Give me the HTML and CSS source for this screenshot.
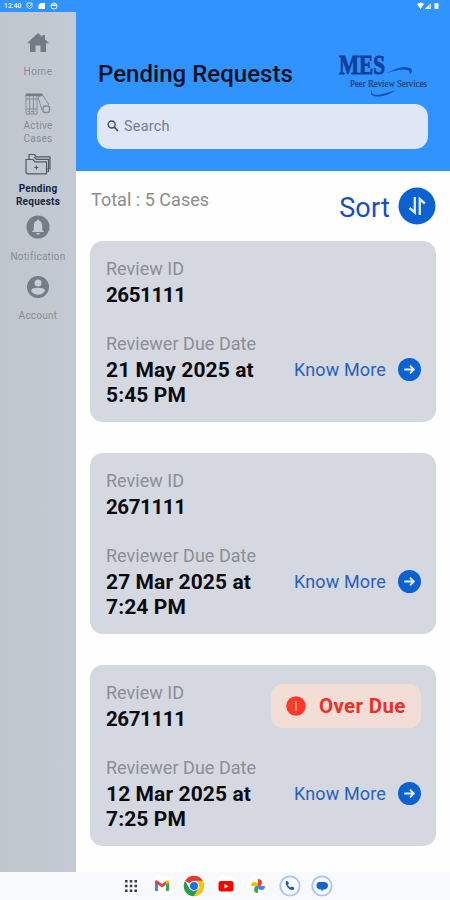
FILE: index.html
```html
<!DOCTYPE html>
<html lang="en">
<head>
<meta charset="utf-8">
<title>Pending Requests</title>
<link rel="stylesheet" href="styles.css">
</head>
<body>
<svg width="0" height="0" class="defs">
  <symbol id="go" viewBox="0 0 24 24"><circle cx="12" cy="12" r="12" fill="#0c61d0"/><path d="M6.500 12h10M12.500 8l4 4-4 4" fill="none" stroke="#e6efff" stroke-width="2"/></symbol>
</svg>
<div class="app">
  <div class="status">
    <span class="time">12:40</span>
    <svg width="7" height="8" viewBox="0 0 7 8"><path d="M1 1h5v3.500L3.500 7 1 4.500z" fill="none" stroke="#d9eaff"/><path d="M2.500 3.500l1 1 2-2.500" fill="none" stroke="#d9eaff"/></svg>
    <svg width="7" height="8" viewBox="0 0 7 8"><path d="M2.500 1H7v6H.5V3z" fill="#fff"/></svg>
    <svg width="8" height="8" viewBox="0 0 8 8"><circle cx="4" cy="4" r="3" fill="none" stroke="#e4f0ff"/><path d="M1 2.500h6v1.500H1z" fill="#fff"/></svg>
    <span class="grow"></span>
    <svg class="signals" width="22" height="8" viewBox="0 0 22 8"><path d="M0 2q3.500-3 7 0L3.500 7z" fill="#fff"/><path d="M8 7l6-6v6z" fill="#b9d9ff"/><path d="M8 7l4-4v4z" fill="#fff"/><rect x="17.500" y="1" width="4" height="6" rx=".7" fill="#fff"/></svg>
  </div>
  <div class="body">
    <nav class="side">
      <a class="item home"><svg width="22" height="20" viewBox="0 0 22 20"><path d="M11 0L0 10.300h3V19h5.500v-6.500h5V19H19v-8.700h3L18 6.300V2h-2.500v2z" fill="#727a84"/></svg><span>Home</span></a>
      <a class="item active-cases"><svg width="26" height="22" viewBox="0 0 26 22" fill="none" stroke="#858c96" stroke-width="1"><path d="M1 1v20h11V1M4.700 3v18M8.400 3v18M1 6h11M1 16h11M13 4l4.500-2L24 12M13 4l4 13"/><path d="M1 1.800h16.500" stroke-width="2.600" stroke="#757d87"/><rect x="18" y="13" width="6.500" height="6.500" rx="2" stroke-width="1.400"/><path d="M2.500 18.500h8" stroke-dasharray="2 1.500"/></svg><span>Active<br>Cases</span></a>
      <a class="item current"><svg width="26" height="22" viewBox="0 0 26 22" fill="none" stroke="#505b69" stroke-width="1.200"><path d="M1 19.500V6.500h7l2 2.300h11.500v12H2.300zM4 6.500V1.500h5.500l2 2.300H25V16h-3.500M9 4l2.500 2.300h12V18.500h-2"/><path d="M11.300 12.500v4M9.300 14.500h4"/></svg><span>Pending<br>Requests</span></a>
      <a class="item notify"><svg width="24" height="24" viewBox="0 0 24 24"><circle cx="12" cy="12" r="11.500" fill="#747c86"/><path d="M12 4.500q1 0 1.200 1.200 3 .9 3 5v4l2 2.300H5.800l2-2.300v-4q0-4 3-5Q11 4.500 12 4.500zM10 18h4q-.5 1.800-2 1.800T10 18z" fill="#c7cdd6"/></svg><span>Notification</span></a>
      <a class="item account"><svg width="22" height="22" viewBox="0 0 22 22"><circle cx="11" cy="11" r="11" fill="#747c86"/><circle cx="11" cy="7" r="3.500" fill="#c7cdd6"/><path d="M4 15q0-3.200 7-3.200T18 15q-2.500 3.700-7 3.700T4 15z" fill="#c7cdd6"/></svg><span>Account</span></a>
    </nav>
    <main>
      <header>
        <div class="titlebar">
          <h1>Pending Requests</h1>
          <svg class="logo" width="92" height="48" viewBox="0 0 92 48"><path d="M49 21Q65 12 73 16.500q2.500 2.500-1 6 0-2.500-1.500-4Q65 15.500 49 21z" fill="#154fad"/><path d="M34 38q-2 6 8 4.500 8-1.500 16-4.500-9 6-17 6.500-11 0-7-6.500z" fill="#154fad"/><text x="1" y="22" class="mes" textLength="46" lengthAdjust="spacingAndGlyphs">MES</text><text x="12" y="34.500" class="peer" textLength="77" lengthAdjust="spacingAndGlyphs">Peer Review Services</text></svg>
        </div>
        <div class="search"><svg width="12" height="12" viewBox="0 0 12 12" fill="none" stroke="#444b57" stroke-width="1.400"><circle cx="4.700" cy="4.500" r="3.500"/><path d="M7.300 7.200L11 11" stroke-width="1.700"/></svg><span>Search</span></div>
      </header>
      <div class="toolbar">
        <span class="total">Total : 5 Cases</span>
        <span class="sort">Sort</span>
        <svg width="38" height="38" viewBox="0 0 38 38"><circle cx="19" cy="19" r="18.500" fill="#0c61d0"/><path d="M16.800 10v15.500L11.500 21M21.800 28V12l5 4.500" fill="none" stroke="#dce8ff" stroke-width="2.400"/></svg>
      </div>
      <section class="cards">
        <article>
          <div class="label">Review ID</div><div class="value id">2651111</div>
          <div class="label">Reviewer Due Date</div>
          <div class="row"><div class="value">21 May 2025 at<br>5:45 PM</div><a class="more">Know More<svg width="23" height="23"><use href="#go"/></svg></a></div>
        </article>
        <article>
          <div class="label">Review ID</div><div class="value id">2671111</div>
          <div class="label">Reviewer Due Date</div>
          <div class="row"><div class="value">27 Mar 2025 at<br>7:24 PM</div><a class="more">Know More<svg width="23" height="23"><use href="#go"/></svg></a></div>
        </article>
        <article>
          <div class="badge"><svg width="20" height="20" viewBox="0 0 20 20"><circle cx="10" cy="10" r="9.800" fill="#fb3a2d"/><path d="M10 5v10" stroke="#ffa399" stroke-width="1.500"/></svg><span>Over Due</span></div>
          <div class="label">Review ID</div><div class="value id">2671111</div>
          <div class="label">Reviewer Due Date</div>
          <div class="row"><div class="value">12 Mar 2025 at<br>7:25 PM</div><a class="more">Know More<svg width="23" height="23"><use href="#go"/></svg></a></div>
        </article>
      </section>
    </main>
  </div>
  <footer>
    <svg width="22" height="22" viewBox="0 0 22 22" fill="#3c3e42"><path d="M6 5h2.600v2.600H6zM10.700 5h2.600v2.600h-2.600zM15.400 5H18v2.600h-2.600zM6 9.700h2.600v2.600H6zM10.700 9.700h2.600v2.600h-2.600zM15.400 9.700H18v2.600h-2.600zM6 14.400h2.600V17H6zM10.700 14.400h2.600V17h-2.600zM15.400 14.400H18V17h-2.600z"/></svg>
    <svg width="22" height="22" viewBox="0 0 22 22"><circle cx="11" cy="11" r="11" fill="#fff"/><path d="M4 6.500l3 2.200V16H4z" fill="#4285f4"/><path d="M15 8.700l3-2.200V16h-3z" fill="#34a853"/><path d="M4 6q1-1.500 3 0l4 3 4-3v3.500l-4 3-7-5z" fill="#ea4335"/><path d="M15 6q2-1.500 3 0v1.500l-3 2z" fill="#fbbc04"/></svg>
    <svg width="22" height="22" viewBox="0 0 22 22"><path d="M11 11L2.080 5.850A10.300 10.300 0 0 1 19.920 5.850z" fill="#e33b2e"/><path d="M11 5.850h8.920A10.300 10.300 0 0 1 11 21.300L15.500 13.600z" fill="#fbc116"/><path d="M2.080 5.850A10.300 10.300 0 0 0 11 21.300l4.500-7.700H6.500z" fill="#2b9c4c"/><circle cx="11" cy="11" r="5.100" fill="#fff"/><circle cx="11" cy="11" r="4" fill="#1a73e8"/></svg>
    <svg width="22" height="22" viewBox="0 0 22 22"><circle cx="11" cy="11" r="11" fill="#fff"/><rect x="3.500" y="6" width="15" height="10.500" rx="2.500" fill="#f00"/><path d="M9.500 9v4.600l4-2.300z" fill="#fff"/></svg>
    <svg width="22" height="22" viewBox="0 0 22 22"><circle cx="11" cy="11" r="11" fill="#fff"/><path d="M11 11V4q4 0 4 3.500 0 2-1.500 3.500z" fill="#ea4335"/><path d="M11 11h7q0 4-3.500 4-2 0-3.500-1.500z" fill="#4285f4"/><path d="M11 11v7q-4 0-4-3.500 0-2 1.500-3.500z" fill="#34a853"/><path d="M11 11H4q0-4 3.500-4 2 0 3.500 1.500z" fill="#fbbc04"/></svg>
    <svg width="22" height="22" viewBox="0 0 22 22"><circle cx="11" cy="11" r="9.700" fill="#f8faff" stroke="#a9c5f1" stroke-width="1.800"/><path d="M6.700 6.500q1.300-1.300 2.500.3l.8 1.700-1.200 1.300q1 2 2.800 2.800l1.300-1.200 2.200 1q.8 1-.8 2.500-3 .7-5.700-2.500-2.600-2.900-1.900-5.900z" fill="#185abc"/></svg>
    <svg width="22" height="22" viewBox="0 0 22 22"><circle cx="11" cy="11" r="9.700" fill="#f8faff" stroke="#a9c5f1" stroke-width="1.800"/><path d="M8 7h5.500Q17 7.500 17 10.500T13.500 14.500h-1L10.500 16.500v-2H9Q5.500 13.500 5.500 10.500T8 7z" fill="#1762d2"/></svg>
  </footer>
</div>
</body>
</html>
```
FILE: styles.css
```css
* { box-sizing: border-box; }
body { margin: 0; font-family: Roboto, "Liberation Sans", sans-serif; background: #fefefe; }
svg { display: block; flex: none; }
.defs { position: absolute; }
.app { width: 450px; height: 900px; display: flex; flex-direction: column; overflow: hidden; }
.status { height: 12px; background: #3093fe; display: flex; align-items: center; padding: 0 11px 0 4px; gap: 5px; color: #fff; }
.time { font-size: 6.5px; font-weight: 500; letter-spacing: .2px; width: 17px; }
.grow { flex: 1; }
.body { flex: 1; display: flex; min-height: 0; }
.side { width: 76px; background: linear-gradient(90deg, #c0c6ce, #c4cad3); display: flex; flex-direction: column; align-items: center; padding-top: 21px; font-size: 10px; line-height: 12.5px; letter-spacing: .25px; color: #858c95; text-align: center; }
.item { display: flex; flex-direction: column; align-items: center; }
.home { height: 60px; gap: 13px; letter-spacing: .5px; }
.active-cases { height: 60px; gap: 5px; }
.current { height: 62px; gap: 8px; color: #172543; font-weight: 700; }
.notify { height: 61px; gap: 12px; }
.account { gap: 12px; }
main { flex: 1; }
header { height: 159px; background: #3093fe; padding: 40px 22px 0 21px; }
.titlebar { height: 52px; display: flex; justify-content: space-between; }
h1 { margin: 8px 0 0 1px; font-size: 24px; font-weight: 500; line-height: 28px; letter-spacing: .03px; color: #071222; white-space: nowrap; }
.mes { font: bold 28px "Liberation Serif", serif; fill: #103f9d; stroke: #103f9d; stroke-width: .9; }
.peer { font: 9.5px "Liberation Serif", serif; fill: #263f67; stroke: #263f67; stroke-width: .2; }
.logo { margin-right: -2px; overflow: visible; }
.search { height: 45px; border-radius: 13px; background: #dfe7f6; display: flex; align-items: center; padding: 0 10px 1px; gap: 5px; font-size: 14.5px; color: #747b87; letter-spacing: .2px; }
.toolbar { height: 70px; display: flex; align-items: flex-start; padding: 16px 14px 0 15px; }
.total { font-size: 18px; line-height: 26px; letter-spacing: .03px; color: #8c8c8c; flex: 1; }
.sort { font-size: 27px; line-height: 42px; color: #184fbd; letter-spacing: .2px; margin-right: 8px; }
.cards { display: flex; flex-direction: column; gap: 31px; padding: 0 14px; }
article { position: relative; height: 181px; border-radius: 13px; background: #d5d8e1; padding: 16px 15px 0 16px; }
.label { font-size: 18px; line-height: 23px; letter-spacing: .03px; color: #8c8e94; white-space: nowrap; }
.value { font-size: 21px; line-height: 24.5px; letter-spacing: .1px; font-weight: 700; color: #0a0b0e; white-space: nowrap; }
.id { margin: 3px 0 24.500px; font-size: 20.5px; letter-spacing: -.4px; }
.row { display: flex; justify-content: space-between; margin-top: 3px; }
.more { display: flex; align-items: center; gap: 12px; height: 23px; font-size: 18px; letter-spacing: .15px; color: #2861bd; }
.badge { position: absolute; right: 15px; top: 19px; width: 150px; height: 44px; border-radius: 12px; background: #f2ddd7; display: flex; align-items: center; padding-left: 15px; gap: 13px; color: #ec3027; font-size: 20.5px; font-weight: 700; letter-spacing: .35px; white-space: nowrap; }
footer { height: 28px; background: #f8f9fd; display: flex; justify-content: center; align-items: center; gap: 10px; padding-left: 2px; }
```
